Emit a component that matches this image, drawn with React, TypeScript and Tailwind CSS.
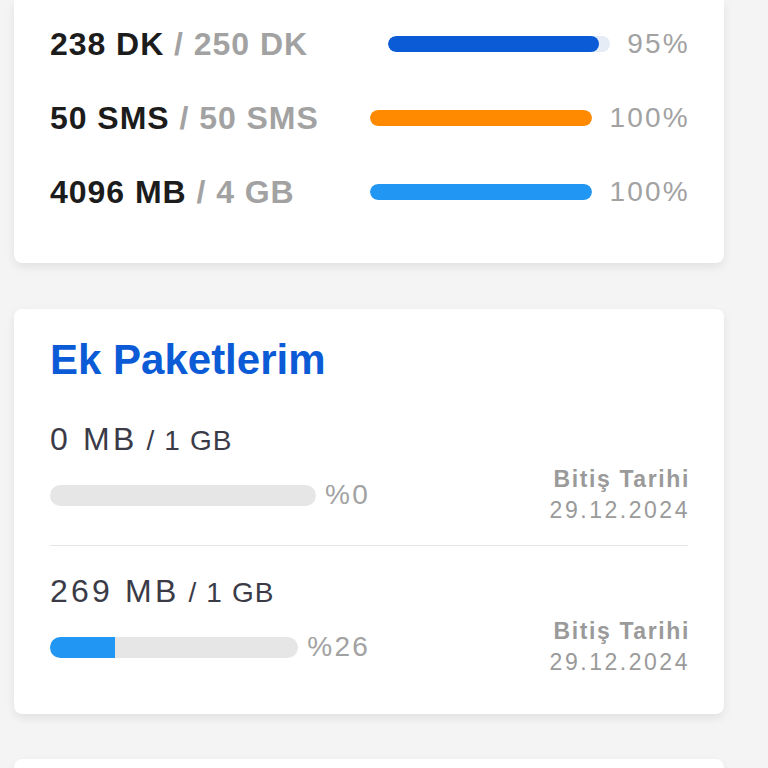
const quotas = [
  { used: '238 DK', total: '250 DK', percent: 95, color: 'bg-[#0b5bd6]', track: 'bg-[#e6ecf6]' },
  { used: '50 SMS', total: '50 SMS', percent: 100, color: 'bg-[#ff8a00]', track: 'bg-[#fde9d2]' },
  { used: '4096 MB', total: '4 GB', percent: 100, color: 'bg-[#2196f3]', track: 'bg-[#dcecfb]' },
];

const extras = [
  { used: '0 MB', total: '1 GB', percent: 0, endDate: '29.12.2024' },
  { used: '269 MB', total: '1 GB', percent: 26, endDate: '29.12.2024' },
];

function QuotaRow({ used, total, percent, color, track }: (typeof quotas)[number]) {
  return (
    <div className="flex h-[74px] items-center justify-between">
      <div className="text-[32px] font-bold leading-none tracking-[0.03em]">
        <span className="text-[#1c1c1c]">{used}</span>
        <span className="text-[#a2a2a2]"> / {total}</span>
      </div>
      <div className="-mr-[2px] flex items-center gap-[17px]">
        <div className={`h-4 w-[222px] overflow-hidden rounded-full ${track}`}>
          <div className={`h-full rounded-full ${color}`} style={{ width: `${percent}%` }} />
        </div>
        <span className="text-[28px] leading-none tracking-[0.08em] text-[#a2a2a2]">{percent}%</span>
      </div>
    </div>
  );
}

function ExtraItem({ used, total, percent, endDate }: (typeof extras)[number]) {
  return (
    <div className="flex flex-col gap-[9px]">
      <div className="flex items-baseline gap-[9px] leading-none text-[#3b3b48]">
        <span className="text-[32px] tracking-[0.1em]">{used}</span>
        <span className="text-[28px] tracking-[0.04em]">/ {total}</span>
      </div>
      <div className="flex items-center justify-between">
        <div className="flex w-[320px] items-center gap-[9px]">
          <div className="h-[21px] flex-1 overflow-hidden rounded-full bg-[#e6e6e6]">
            <div className="h-full bg-[#2196f3]" style={{ width: `${percent}%` }} />
          </div>
          <span className="text-[28px] leading-none tracking-[0.08em] text-[#a2a2a2]">%{percent}</span>
        </div>
        <div className="-mr-[2px] text-right text-[23px] leading-[31px] text-[#9a9a9a]">
          <div className="font-bold tracking-[0.07em]">Bitiş Tarihi</div>
          <div className="tracking-[0.11em]">{endDate}</div>
        </div>
      </div>
    </div>
  );
}

export default function App() {
  return (
    <div className="min-h-screen bg-[#f4f4f4] pl-[14px] pr-[44px] font-['Liberation_Sans',Arial,sans-serif]">
      <div className="rounded-b-lg bg-white px-9 pb-[34px] pt-[7px] shadow-[0_4px_10px_rgba(0,0,0,0.08)]">
        {quotas.map((q) => (
          <QuotaRow key={q.used} {...q} />
        ))}
      </div>

      <div className="mt-[46px] rounded-lg bg-white px-9 pb-9 pt-[30px] shadow-[0_4px_10px_rgba(0,0,0,0.08)]">
        <h2 className="text-[42px] font-bold leading-none text-[#0b5bd6]">Ek Paketlerim</h2>
        <div className="mt-[42px] flex flex-col">
          {extras.map((e, i) => (
            <div key={i} className={i === 0 ? 'border-b border-[#e6e6e6] pb-[19px]' : 'pt-[29px]'}>
              <ExtraItem {...e} />
            </div>
          ))}
        </div>
      </div>

      <div className="mt-[45px] h-24 rounded-lg bg-white shadow-[0_4px_10px_rgba(0,0,0,0.08)]" />
    </div>
  );
}
